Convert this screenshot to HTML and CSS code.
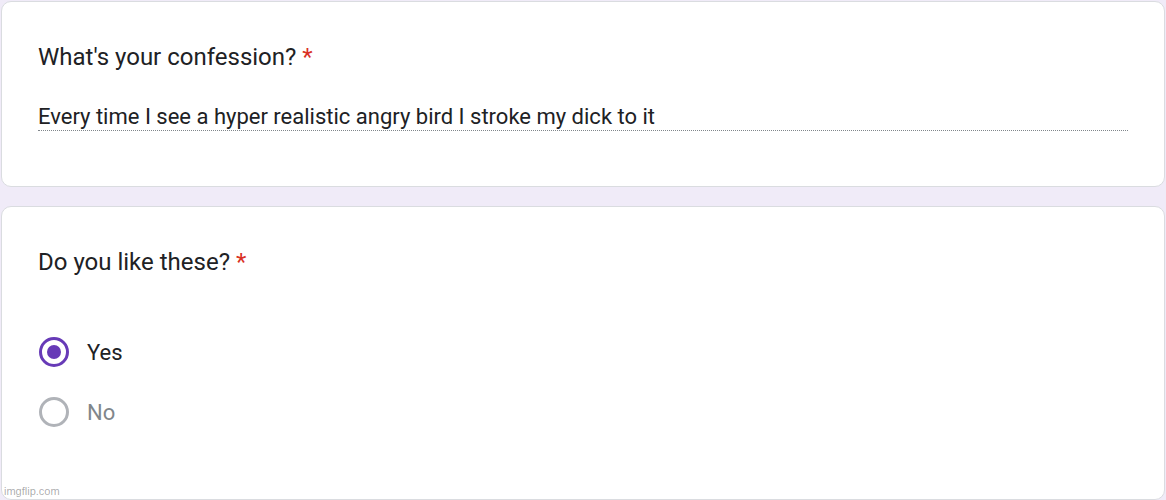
FILE: index.html
```html
<!DOCTYPE html>
<html>
<head>
<meta charset="utf-8">
<link rel="stylesheet" href="styles.css">
</head>
<body>
<div class="page">
  <div class="card card-1">
    <div class="question">What's your confession? <span class="req">*</span></div>
    <div class="answer">Every time I see a hyper realistic angry bird I stroke my dick to it</div>
  </div>
  <div class="card card-2">
    <div class="question">Do you like these? <span class="req">*</span></div>
    <div class="options">
      <div class="option">
        <span class="radio checked"><span class="dot"></span></span>
        <span class="label">Yes</span>
      </div>
      <div class="option">
        <span class="radio"></span>
        <span class="label muted">No</span>
      </div>
    </div>
  </div>
  <div class="watermark">imgflip.com</div>
</div>
</body>
</html>
```

FILE: styles.css
```css
html, body {
  margin: 0;
  padding: 0;
  background: #f0ebf8;
}
body {
  font-family: Roboto, "Liberation Sans", sans-serif;
  color: #202124;
  width: 1166px;
  height: 500px;
  overflow: hidden;
}
.page {
  position: relative;
  display: flex;
  flex-direction: column;
  gap: 19px;
  padding: 1px 1px 0 1px;
  height: 500px;
  box-sizing: border-box;
}
.card {
  background: #fff;
  border: 1px solid #dadce0;
  border-radius: 10px;
  box-sizing: border-box;
  padding: 39px 36px 0 36px;
}
.card-1 {
  height: 186px;
}
.card-2 {
  height: 294px;
}
.question {
  font-size: 24px;
  line-height: 32px;
}
.req {
  color: #d93025;
}
.answer {
  margin-top: 31px;
  font-size: 22px;
  line-height: 26px;
  border-bottom: 1px dotted #80868b;
  width: 1090px;
}
.options {
  margin-top: 59px;
  display: flex;
  flex-direction: column;
  gap: 30px;
}
.option {
  display: flex;
  align-items: center;
  gap: 18px;
  height: 30px;
}
.radio {
  width: 30px;
  height: 30px;
  border: 3px solid #b0b3b8;
  border-radius: 50%;
  box-sizing: border-box;
  display: flex;
  align-items: center;
  justify-content: center;
  margin-left: 1px;
}
.radio.checked {
  border-color: #673ab7;
}
.dot {
  width: 14px;
  height: 14px;
  border-radius: 50%;
  background: #673ab7;
}
.label {
  font-size: 22px;
}
.label.muted {
  color: #80868b;
}
.watermark {
  position: absolute;
  left: 4px;
  bottom: 3px;
  font-family: "Liberation Sans", Arial, sans-serif;
  font-size: 11px;
  color: rgba(0,0,0,0.35);
}
```
